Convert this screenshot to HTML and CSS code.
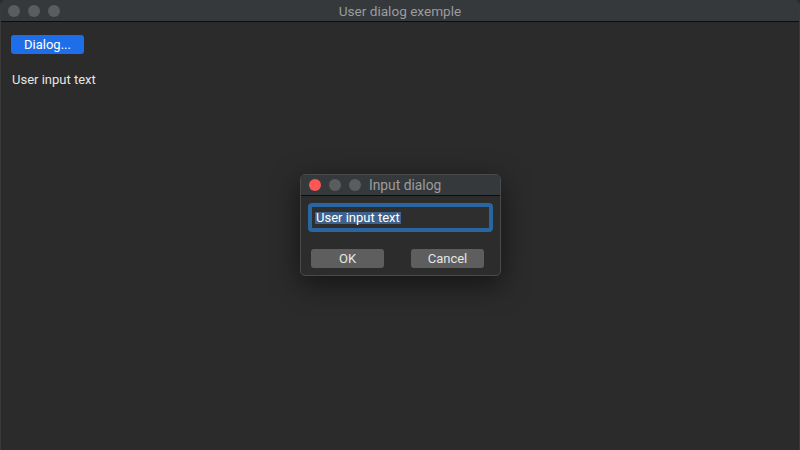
FILE: index.html
```html
<!DOCTYPE html>
<html>
<head>
<meta charset="utf-8">
<link rel="stylesheet" href="styles.css">
</head>
<body>
<div class="window">
  <div class="titlebar">
    <div class="lights">
      <span class="light"></span><span class="light"></span><span class="light"></span>
    </div>
    <div class="title">User dialog exemple</div>
  </div>
  <div class="content">
    <button class="primary">Dialog...</button>
    <div class="label">User input text</div>
  </div>
  <div class="dialog">
    <div class="dtitlebar">
      <div class="lights dlights">
        <span class="light red"></span><span class="light"></span><span class="light"></span>
      </div>
      <div class="dtitle">Input dialog</div>
    </div>
    <div class="dbody">
      <div class="field"><span class="sel">User input text</span></div>
      <div class="buttons">
        <button class="btn">OK</button>
        <button class="btn">Cancel</button>
      </div>
    </div>
  </div>
</div>
</body>
</html>
```
FILE: styles.css
```css
html, body {
  margin: 0;
  padding: 0;
  background: #2b2b2b;
  width: 800px;
  height: 450px;
  overflow: hidden;
  font-family: Roboto, "Liberation Sans", sans-serif;
  font-size: 13px;
}
.window {
  position: relative;
  width: 800px;
  height: 450px;
  box-sizing: border-box;
  background: #2b2b2b;
  border-radius: 5px 5px 0 0;
  border-left: 1px solid #3a3a3a;
  border-right: 1px solid #3a3a3a;
  overflow: hidden;
}
.titlebar {
  height: 21px;
  background: #36393c;
  border-bottom: 1px solid #0c0c0c;
  display: flex;
  align-items: center;
  position: relative;
}
.lights {
  display: flex;
  gap: 8px;
  padding-left: 7px;
}
.light {
  width: 12px;
  height: 12px;
  border-radius: 50%;
  background: #5b5c5e;
}
.light.red { background: #fc5753; }
.title {
  position: absolute;
  left: 0; right: 0; top: 0;
  line-height: 22px;
  text-align: center;
  color: #9b9c9e;
  font-size: 13.6px;
}
.content {
  padding: 13px 0 0 10px;
}
.primary {
  display: block;
  width: 73px;
  height: 19px;
  border: none;
  border-radius: 3px;
  background: #1f6ee9;
  color: #fff;
  font-family: inherit;
  font-size: 13px;
  padding: 0;
  margin: 0;
}
.label {
  color: #e6e6e6;
  margin-top: 17px;
  padding-left: 1px;
  line-height: 17px;
}
.dialog {
  position: absolute;
  left: 299px;
  top: 174px;
  width: 201px;
  height: 102px;
  box-sizing: border-box;
  border: 1px solid #4a4a4a;
  border-radius: 5px;
  background: #2c2c2c;
  box-shadow: 0 8px 28px rgba(0,0,0,0.55);
  overflow: hidden;
}
.dtitlebar {
  height: 20px;
  background: #36393c;
  border-bottom: 1px solid #0c0c0c;
  display: flex;
  align-items: center;
}
.dlights { padding-left: 8px; }
.dtitle {
  color: #9b9c9e;
  margin-left: 8px;
  font-size: 13.8px;
}
.dbody {
  padding: 7px 7px 0 7px;
}
.field {
  height: 29px;
  box-sizing: border-box;
  border: 4px solid #2965a0;
  border-radius: 4px;
  background: #2e2e2e;
  padding: 5px 0 0 3px;
}
.sel {
  display: inline-block;
  vertical-align: top;
  height: 12px;
  line-height: 12px;
  background: #3f638d;
  color: #fff;
  padding: 0 1px;
}
.buttons {
  display: flex;
  justify-content: space-between;
  padding: 17px 9px 0 3px;
}
.btn {
  width: 73px;
  height: 19px;
  border: none;
  border-radius: 3px;
  background: #5e5e5e;
  color: #e6e6e6;
  font-family: inherit;
  font-size: 13px;
  padding: 0;
}
```
